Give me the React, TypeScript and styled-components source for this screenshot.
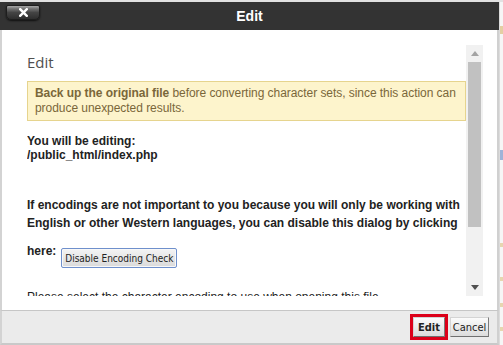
import React from "react";
import styled, { createGlobalStyle } from "styled-components";

const Global = createGlobalStyle`
  html, body { margin: 0; padding: 0; }
  body {
    background: #eeeeee;
    font-family: "Liberation Sans", Arial, sans-serif;
    overflow: hidden;
  }
`;

const Page = styled.div`
  width: 503px;
  height: 345px;
  display: flex;
  flex-direction: column;
  overflow: hidden;
`;

const TopStrip = styled.div`
  height: 2px;
  flex: none;
  background: #e2e2e2;
`;

const Row = styled.div`
  display: flex;
  flex: 1;
  min-height: 0;
`;

const Dialog = styled.div`
  width: 499px;
  flex: none;
  display: flex;
  flex-direction: column;
`;

const TitleBar = styled.div`
  height: 28px;
  flex: none;
  background: #333333;
  display: grid;
  grid-template-columns: 1fr auto 1fr;
  align-items: center;
`;

const CloseButton = styled.button`
  justify-self: start;
  align-self: start;
  margin: 3px 0 0 6px;
  width: 34px;
  height: 15px;
  padding: 0;
  border: 1px solid #1e1e1e;
  border-radius: 2px 2px 5px 5px;
  background: linear-gradient(#a8a8a8 0%, #727272 22%, #444444 50%, #2e2e2e 100%);
  box-shadow: 0 1px 2px rgba(0, 0, 0, 0.7);
  display: flex;
  align-items: center;
  justify-content: center;
  cursor: pointer;
`;

const Title = styled.div`
  color: #ffffff;
  font-weight: bold;
  font-size: 14px;
  line-height: 16px;
`;

const Body = styled.div`
  height: 280px;
  flex: none;
  box-sizing: border-box;
  background: #ffffff;
  border-left: 2px solid #d3d3d3;
  border-right: 2px solid #d0d0d0;
  padding: 15px 14px 0 25px;
`;

const Scroller = styled.div`
  height: 251px;
  display: flex;
`;

const Content = styled.div`
  flex: 1;
  min-width: 0;
  overflow: hidden;
`;

const Heading = styled.h3`
  margin: 7px 0 0;
  font-family: "Open Sans", "Liberation Sans", sans-serif;
  font-weight: normal;
  font-size: 15px;
  line-height: 20px;
  color: #505050;
`;

const Alert = styled.div`
  margin-top: 9px;
  border: 1px solid #e6d48e;
  background: #fdf4cc;
  color: #7a673a;
  font-size: 12px;
  line-height: 15px;
  padding: 4px 2px 4px 7px;
  letter-spacing: -0.05px;
`;

const Editing = styled.div`
  margin-top: 13px;
  font-size: 12px;
  line-height: 14px;
  font-weight: bold;
  color: #222222;
`;

const Para = styled.p<{ $gap: number; $bold?: boolean }>`
  margin: ${(p) => p.$gap}px 0 0;
  font-size: 12px;
  line-height: 18px;
  font-weight: ${(p) => (p.$bold ? "bold" : "normal")};
  color: #222222;
`;

const HereRow = styled.div`
  margin-top: 10px;
  display: flex;
  align-items: flex-start;
  gap: 5px;
  font-size: 12px;
  line-height: 18px;
  font-weight: bold;
  color: #222222;
`;

const DisableButton = styled.button`
  margin-top: 6px;
  height: 20px;
  width: 116px;
  padding: 0;
  box-sizing: border-box;
  border: 1px solid #6f90cc;
  box-shadow: inset 0 0 0 1px #f8f8f8;
  border-radius: 2px;
  background: linear-gradient(#f4f4f4, #dadada);
  font-family: "DejaVu Sans Condensed", "DejaVu Sans", sans-serif;
  font-size: 10px;
  color: #222222;
  white-space: nowrap;
`;

const ScrollBar = styled.div`
  width: 17px;
  flex: none;
  background: #f1f1f1;
  display: flex;
  flex-direction: column;
`;

const ScrollArrow = styled.div`
  height: 17px;
  flex: none;
  display: flex;
  align-items: center;
  justify-content: center;
`;

const Track = styled.div`
  flex: 1;
  padding: 0 2px;
`;

const Thumb = styled.div`
  height: 165px;
  background: #c1c1c1;
`;

const Footer = styled.div`
  height: 35px;
  flex: none;
  box-sizing: border-box;
  background: #ebebeb;
  border-top: 1px solid #c6c6c6;
  border-bottom: 2px solid #c9c9c9;
  border-left: 2px solid #d3d3d3;
  border-right: 2px solid #d0d0d0;
  padding: 6px 8px 0 0;
  display: flex;
  justify-content: flex-end;
  align-items: flex-start;
  gap: 5px;
`;

const FooterButton = styled.button<{ $w: number; $primary?: boolean; $marked?: boolean }>`
  width: ${(p) => p.$w}px;
  height: 20px;
  padding: 0;
  box-sizing: border-box;
  border: 1px solid;
  border-color: #d4d4d4 #7c7c7c #707070 #d4d4d4;
  background: linear-gradient(#fbfbfb, #dcdcdc);
  font-family: "DejaVu Sans Condensed", "DejaVu Sans", sans-serif;
  font-size: 11px;
  font-weight: ${(p) => (p.$primary ? "bold" : "normal")};
  color: #222222;
  outline: ${(p) => (p.$marked ? "3px solid #dc0019" : "none")};
  outline-offset: 0;
`;

const PageEdge = styled.div`
  flex: 1;
  background: #f6f6f6;
  border-left: 1px solid #dcdcdc;
  display: flex;
  flex-direction: column;
`;

const EdgeMark = styled.div<{ $gap: number; $h: number; $c: string }>`
  margin-top: ${(p) => p.$gap}px;
  height: ${(p) => p.$h}px;
  background: ${(p) => p.$c};
`;

const UpIcon = () => (
  <svg width="8" height="5" viewBox="0 0 8 5">
    <polygon points="0,5 8,5 4,0" fill="#a3a3a3" />
  </svg>
);

const DownIcon = () => (
  <svg width="8" height="5" viewBox="0 0 8 5">
    <polygon points="0,0 8,0 4,5" fill="#505050" />
  </svg>
);

const CloseIcon = () => (
  <svg width="9" height="9" viewBox="0 0 9 9">
    <path d="M1.2 1.2 L7.8 7.8 M7.8 1.2 L1.2 7.8" stroke="#ffffff" strokeWidth="2.4" strokeLinecap="square" />
  </svg>
);

export default function App() {
  return (
    <>
      <Global />
      <Page>
        <TopStrip />
        <Row>
          <Dialog>
            <TitleBar>
              <CloseButton aria-label="Close">
                <CloseIcon />
              </CloseButton>
              <Title>Edit</Title>
              <span />
            </TitleBar>
            <Body>
              <Scroller>
                <Content>
                  <Heading>Edit</Heading>
                  <Alert>
                    <b>Back up the original file</b> before converting character sets, since this action can produce unexpected results.
                  </Alert>
                  <Editing>
                    You will be editing:
                    <br />
                    /public_html/index.php
                  </Editing>
                  <Para $gap={34} $bold>
                    If encodings are not important to you because you will only be working with English or other Western languages, you can disable this dialog by clicking
                  </Para>
                  <HereRow>
                    <span>here:</span>
                    <DisableButton>Disable Encoding Check</DisableButton>
                  </HereRow>
                  <Para $gap={20}>
                    Please select the character encoding to use when opening this file.
                  </Para>
                </Content>
                <ScrollBar>
                  <ScrollArrow>
                    <UpIcon />
                  </ScrollArrow>
                  <Track>
                    <Thumb />
                  </Track>
                  <ScrollArrow>
                    <DownIcon />
                  </ScrollArrow>
                </ScrollBar>
              </Scroller>
            </Body>
            <Footer>
              <FooterButton $w={32} $primary $marked>
                Edit
              </FooterButton>
              <FooterButton $w={39}>Cancel</FooterButton>
            </Footer>
          </Dialog>
          <PageEdge>
            <EdgeMark $gap={24} $h={8} $c="#e3cfa3" />
            <EdgeMark $gap={116} $h={10} $c="#9fb3d8" />
            <EdgeMark $gap={83} $h={4} $c="#e6d6b0" />
            <EdgeMark $gap={30} $h={4} $c="#e6d6b0" />
            <EdgeMark $gap={22} $h={4} $c="#e6d6b0" />
            <EdgeMark $gap={20} $h={4} $c="#e6d6b0" />
          </PageEdge>
        </Row>
      </Page>
    </>
  );
}
